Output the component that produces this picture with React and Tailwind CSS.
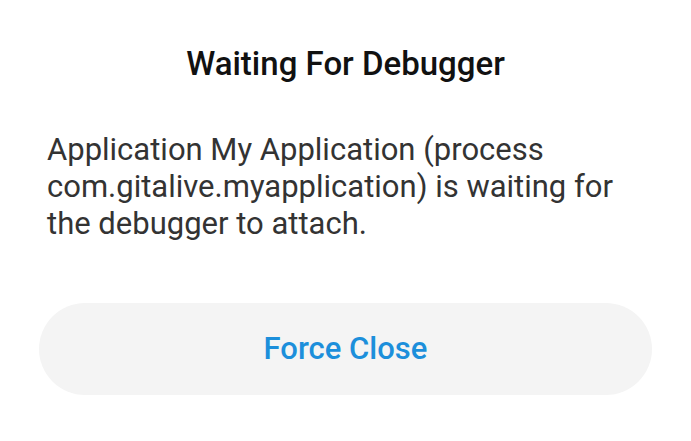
import React from "react";

export default function App() {
  return (
    <div
      className="flex h-[441px] w-[691px] flex-col bg-white"
      style={{ fontFamily: "Roboto, 'Noto Sans', sans-serif" }}
    >
      <h1 className="pt-[44px] text-center text-[33px] font-medium leading-[40px] text-[#111111]">
        Waiting For Debugger
      </h1>

      <p className="mt-[47px] px-[47px] text-[31px] leading-[37px] text-[#333333]">
        Application My Application (process com.gitalive.myapplication) is
        waiting for the debugger to attach.
      </p>

      <div className="mt-[61px] px-[39px]">
        <button className="flex h-[92px] w-full items-center justify-center rounded-full bg-[#f4f4f4] text-[31px] font-medium text-[#1c8fdb]">
          Force Close
        </button>
      </div>
    </div>
  );
}
